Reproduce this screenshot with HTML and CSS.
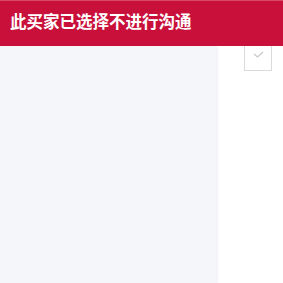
FILE: index.html
```html
<!DOCTYPE html>
<html lang="zh">
<head>
<meta charset="utf-8">
<link rel="stylesheet" href="styles.css">
</head>
<body>
<div class="header">此买家已选择不进行沟通</div>
<div class="main">
  <div class="side"></div>
  <div class="content">
    <div class="check">
      <svg width="11" height="7" viewBox="0 0 11 7"><path d="M1 3 L4.5 6 L10 1" fill="none" stroke="#c8c8c8" stroke-width="1.3"/></svg>
    </div>
  </div>
</div>
</body>
</html>
```
FILE: styles.css
```css
html, body { margin: 0; padding: 0; }
body {
  width: 283px; height: 283px; overflow: hidden; background: #fff;
  font-family: "Noto Sans CJK SC", "Noto Sans", sans-serif;
  display: flex; flex-direction: column;
}
.header {
  position: relative; z-index: 2;
  height: 46px; box-sizing: border-box;
  background: #c8103a;
  border-top: 1px solid #d84a66;
  color: #fff; font-weight: 700; font-size: 16.5px;
  padding-left: 10px; line-height: 40px;
}
.main { flex: 1; display: flex; }
.side {
  width: 216px; background: #f5f6f9;
  box-shadow: 1px 0 3px rgba(220,222,235,0.6);
}
.content { flex: 1; padding-left: 28px; }
.check {
  width: 28px; height: 28px; box-sizing: border-box;
  margin-top: -3px;
  border: 1px solid #dadada;
  display: flex; justify-content: center; align-items: flex-start;
  padding-top: 7px;
}
```
